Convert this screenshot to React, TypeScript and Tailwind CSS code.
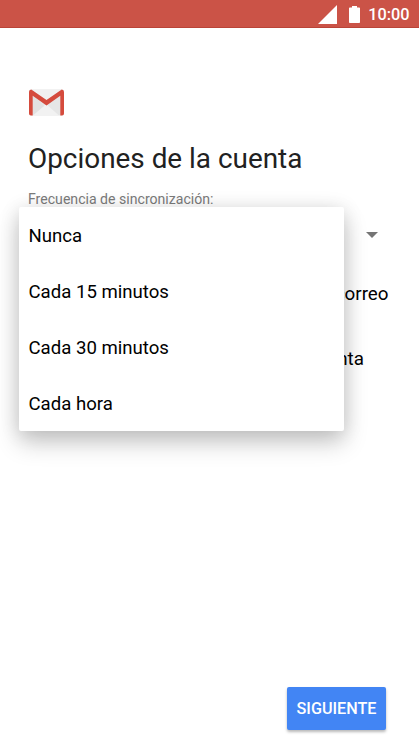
const options = ['Nunca', 'Cada 15 minutos', 'Cada 30 minutos', 'Cada hora'];

function StatusBar() {
  return (
    <header className="flex h-7 shrink-0 items-center justify-end border-b border-[#ba4438] bg-[#cb5347] pr-[9.5px] text-white">
      <svg className="mt-px mr-[12px] h-[19px] w-[19px]" viewBox="0 0 19 19" fill="currentColor">
        <path d="M0 19 19 0v19z" />
      </svg>
      <svg className="mt-px mr-[8px] h-[17px] w-[11px]" viewBox="0 0 11 17" fill="currentColor">
        <path d="M3 0h5v1.500h2.200q.8 0 .8.8v13.900q0 .8-.8.8H.8q-.8 0-.8-.8V2.300Q0 1.500.8 1.500H3z" />
      </svg>
      <span className="mt-[4px] text-[16.3px] leading-none font-medium">10:00</span>
    </header>
  );
}

function GmailLogo() {
  return (
    <svg className="block h-[27px] w-[36px]" viewBox="0 0 36 27">
      <rect x="1" y="0.5" width="35" height="26" rx="2" fill="#e6e6e6" />
      <path d="M5 26.500 18 15l13 11.500z" fill="#f2f2f2" />
      <path d="M5 6v20l11-9z" fill="#e2e2e2" />
      <path d="M4 .5h29L18.500 12z" fill="#f1f1f1" />
      <path d="M1 3Q1 .5 3.200.5L18.500 10.900 33.800.5Q36 .5 36 3v21.500q0 2-2 2h-1.700V6.800L18.500 16.500 4.700 6.800V26.500H3q-2 0-2-2z" fill="#d54b3d" />
    </svg>
  );
}

export default function App() {
  return (
    <div className="flex h-[746px] w-[419px] flex-col overflow-hidden bg-white font-['Roboto',sans-serif] text-black">
      <StatusBar />
      <main className="flex flex-1 flex-col pt-[61px] pl-7">
        <GmailLogo />
        <h1 className="mt-[25px] text-[27.9px] leading-[36px] text-[#212121]">Opciones de la cuenta</h1>
        <p className="mt-[13px] text-[14.1px] leading-[19px] text-[#7b7b7b]">Frecuencia de sincronización:</p>
        <div className="relative">
          <div className="flex h-[51px] items-center justify-end pr-[41px]">
            <svg className="h-[6px] w-[12px]" viewBox="0 0 12 6" fill="#757575">
              <path d="M0 0h12L6 6z" />
            </svg>
          </div>
          <p className="mt-[22px] mr-[30.5px] text-right text-[18.8px] leading-[24px]">correo</p>
          <p className="mt-[41px] mr-[55px] text-right text-[18.8px] leading-[24px]">cuenta</p>
          <ul className="absolute top-[-2px] -left-[9px] w-[325px] rounded-[2px] bg-white shadow-[0_12px_24px_rgba(0,0,0,0.2),0_2px_20px_rgba(0,0,0,0.12)]">
            {options.map((option) => (
              <li key={option} className="flex h-[56px] items-center pt-[3px] pl-[9.500px] text-[18.6px]">{option}</li>
            ))}
          </ul>
        </div>
        <button className="mt-auto mr-[33px] mb-4 h-[43px] w-[99px] self-end rounded-[2px] bg-[#4285f4] pt-[2px] text-[16.2px] font-medium text-white shadow-[0_2px_3px_rgba(0,0,0,0.28)]">
          SIGUIENTE
        </button>
      </main>
    </div>
  );
}
